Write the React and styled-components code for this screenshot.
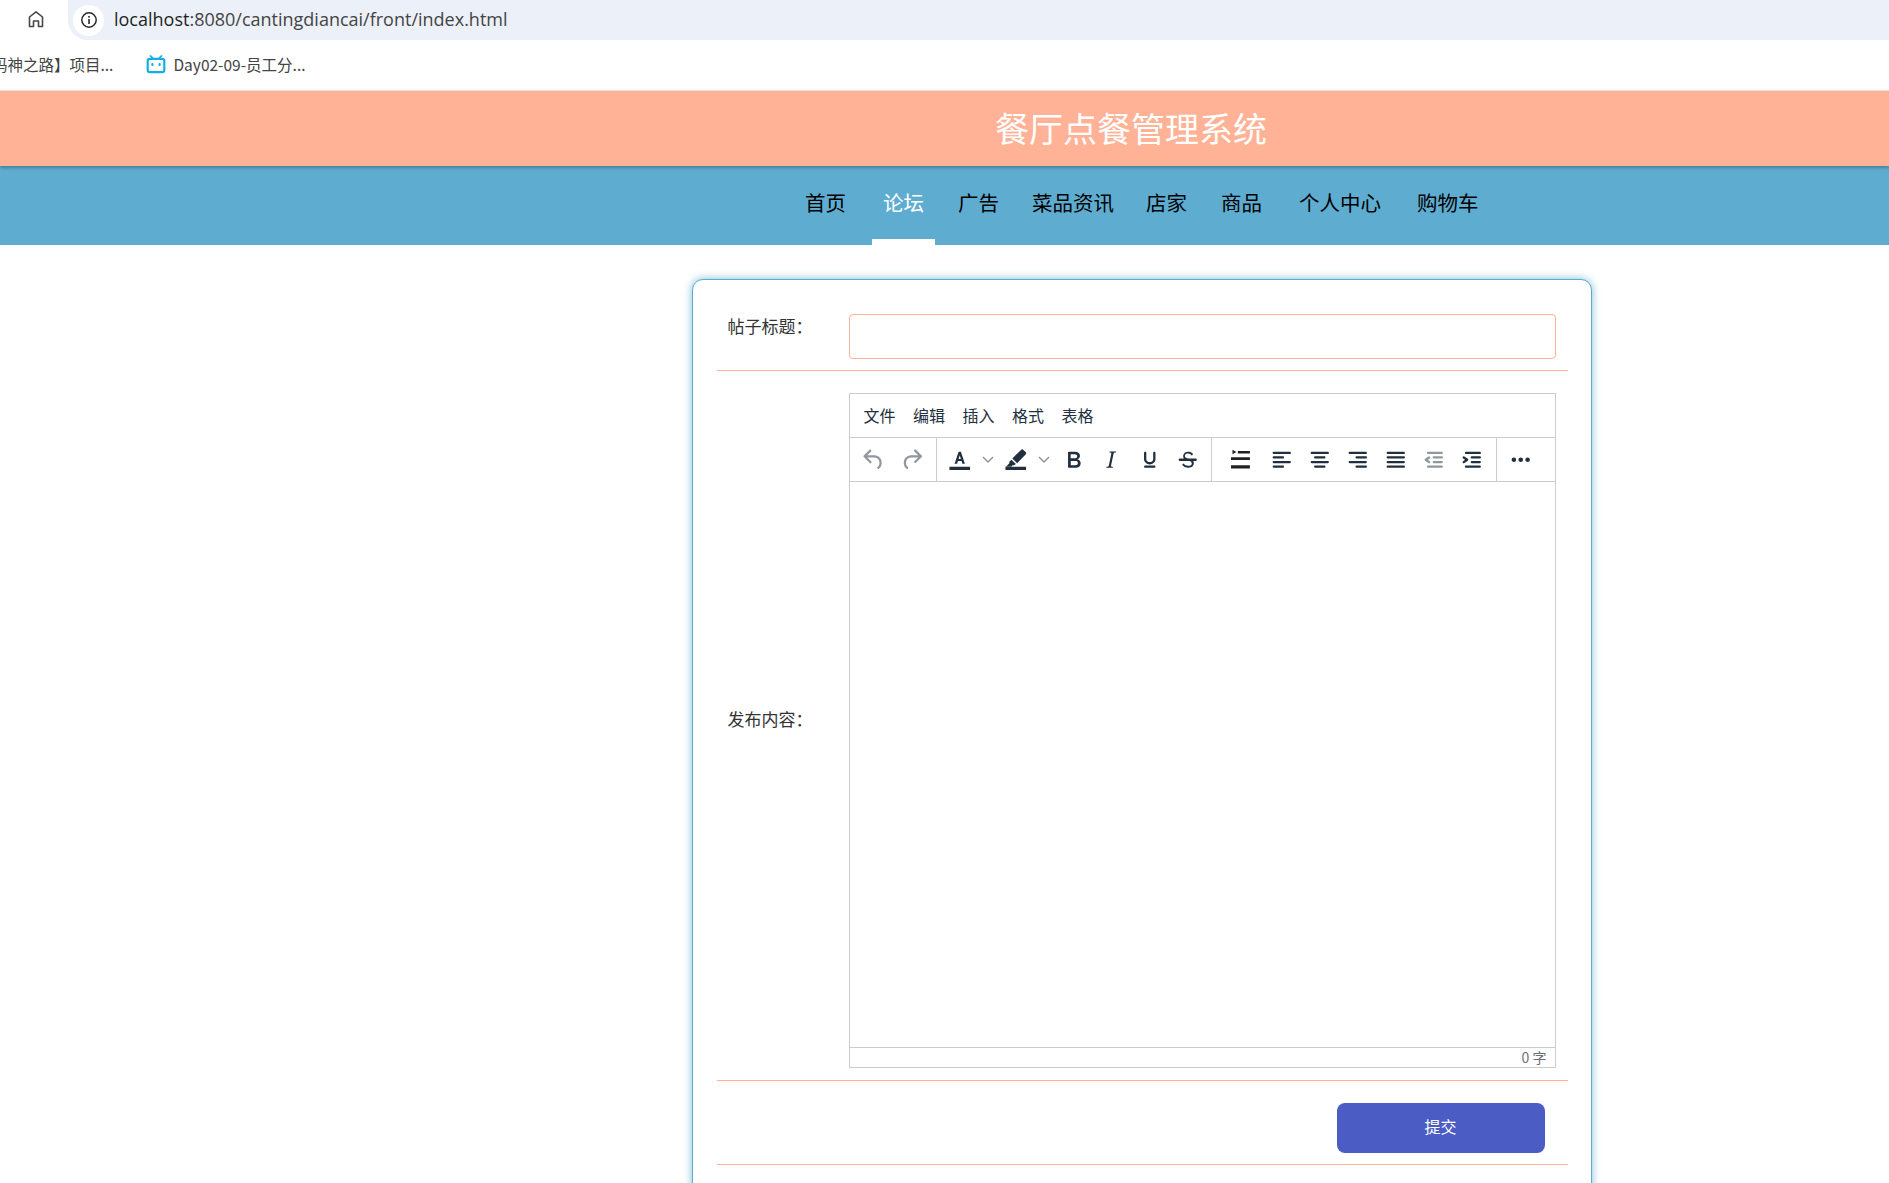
import React from "react";
import styled, { createGlobalStyle } from "styled-components";

const Global = createGlobalStyle`
  html, body { margin: 0; padding: 0; background: #fff; height: 100%; overflow: hidden; }
  body { font-family: "Noto Sans CJK SC", "Liberation Sans", sans-serif; }
  * { box-sizing: border-box; }
`;

const Page = styled.div`
  display: flex;
  flex-direction: column;
  width: 1889px;
  height: 1183px;
  overflow: hidden;
`;

const AddressRow = styled.div`
  display: flex;
  align-items: flex-start;
  height: 40px;
  flex: none;
  padding-left: 27px;
`;
const HomeIcon = styled.svg`
  width: 18px;
  height: 18px;
  margin: 10px 23px 0 0;
  flex: none;
`;
const AddressBar = styled.div`
  flex: 1;
  height: 40px;
  display: flex;
  align-items: center;
  background: #ebf0f9;
  border-radius: 0 0 0 20px;
  padding-left: 5px;
`;
const SiteBadge = styled.div`
  width: 31px;
  height: 31px;
  border-radius: 50%;
  background: #fff;
  display: flex;
  align-items: center;
  justify-content: center;
  margin-right: 10px;
`;
const Url = styled.span`
  font-family: "Open Sans", "Noto Sans", sans-serif;
  font-size: 18px;
  line-height: 38px;
  margin-bottom: 2px;
  color: #1f1f1f;
`;
const UrlMuted = styled.span`
  color: #444;
`;

const BookmarkRow = styled.div`
  display: flex;
  align-items: center;
  height: 51px;
  padding-bottom: 3px;
  flex: none;
  border-bottom: 1px solid #e4e4e4;
  overflow: hidden;
`;
const Bookmark = styled.span`
  font-size: 15.5px;
  color: #444;
  white-space: nowrap;
  margin-left: ${(p) => p.$left}px;
`;
const BiliIcon = styled.svg`
  width: 20px;
  height: 20px;
  margin-left: 33px;
  flex: none;
`;

const Header = styled.header`
  height: 75px;
  flex: none;
  background: #ffb296;
  box-shadow: 0 2px 3px rgba(0, 0, 0, 0.25);
  position: relative;
  z-index: 1;
  display: flex;
  align-items: center;
  padding-left: 995px;
`;
const Title = styled.h1`
  margin: 0 0 2px;
  font-size: 34px;
  font-weight: 400;
  color: #fff;
  white-space: nowrap;
  line-height: 1;
`;

const Nav = styled.nav`
  height: 79px;
  flex: none;
  background: #5eadd0;
  display: flex;
  align-items: stretch;
  padding-left: 805px;
`;
const NavItem = styled.a`
  position: relative;
  margin-left: ${(p) => p.$gap}px;
  font-size: 20.5px;
  line-height: 72px;
  color: ${(p) => (p.$active ? "#fff" : "#000")};
  white-space: nowrap;
  ${(p) =>
    p.$active &&
    `&::after {
      content: "";
      position: absolute;
      left: -11px;
      right: -11px;
      bottom: 0;
      height: 6px;
      background: #fff;
    }`}
`;

const Card = styled.main`
  width: 900px;
  height: 1200px;
  flex: none;
  margin: 34px 0 0 692px;
  background: #fff;
  border: 1.5px solid #5dacd0;
  border-radius: 11px;
  box-shadow: 0 0 8px rgba(93, 172, 208, 0.8);
  padding: 33.5px 23.5px 0;
`;

const Row = styled.div`
  display: flex;
  align-items: ${(p) => p.$align || "flex-start"};
  border-bottom: 1px solid #ffb296;
  padding: ${(p) => p.$pad};
`;
const Label = styled.label`
  width: 132px;
  flex: none;
  padding-left: 11px;
  margin-bottom: ${(p) => p.$lift || 0}px;
  font-size: 17px;
  line-height: 24px;
  color: #333;
  white-space: nowrap;
`;
const TitleInput = styled.input`
  width: 707px;
  height: 45px;
  border: 1px solid #ffb296;
  border-radius: 4px;
  background: #fff;
  outline: none;
`;

const Editor = styled.div`
  width: 707px;
  height: 675px;
  border: 1px solid #ccc;
  display: flex;
  flex-direction: column;
  background: #fff;
`;
const MenuBar = styled.div`
  height: 44px;
  flex: none;
  display: flex;
  align-items: center;
  gap: 17.5px;
  padding-left: 14px;
  padding-bottom: 1px;
  border-bottom: 1px solid #ccc;
`;
const MenuItem = styled.span`
  font-size: 16px;
  color: #222f3e;
`;
const Toolbar = styled.div`
  height: 44px;
  flex: none;
  display: flex;
  border-bottom: 1px solid #ccc;
`;
const ToolGroup = styled.div`
  width: ${(p) => p.$width}px;
  flex: none;
  display: flex;
  align-items: center;
  padding: 2px 0 0 ${(p) => p.$pad}px;
  border-right: ${(p) => (p.$last ? "none" : "1px solid #ccc")};
`;
const ToolButton = styled.span`
  width: ${(p) => p.$width || 38}px;
  height: 36px;
  flex: none;
  display: flex;
  align-items: center;
  justify-content: center;
`;
const ToolSvg = styled.svg`
  width: 27.5px;
  height: 27.5px;
  flex: none;
  fill: ${(p) => (p.$muted ? "rgba(34,47,62,.5)" : p.$dark ? "#222" : "#222f3e")};
`;
const ChevronSvg = styled.svg`
  width: 14px;
  height: 10px;
  flex: none;
  fill: none;
  stroke: rgba(34, 47, 62, 0.5);
  stroke-width: 1.5;
`;
const EditArea = styled.div`
  flex: 1;
`;
const StatusBar = styled.div`
  height: 20px;
  flex: none;
  border-top: 1px solid #ccc;
  display: flex;
  align-items: center;
  justify-content: flex-end;
  padding-right: 8px;
  font-size: 14px;
  color: #6a7078;
  line-height: 1;
`;

const SubmitButton = styled.button`
  width: 208px;
  height: 50px;
  margin-left: 488px;
  padding: 0 0 4px;
  border: none;
  border-radius: 8px;
  background: #4b5cc4;
  color: #fff;
  font-family: inherit;
  font-size: 16px;
`;

const I = {
  undo: "M6.4 8H12c3.7 0 6.2 2 6.8 5.1.6 2.7-.4 5.6-2.3 6.8a1 1 0 0 1-1-1.8c1.1-.6 1.8-2.7 1.4-4.6-.5-2.1-2.1-3.5-4.9-3.5H6.4l3.3 3.3a1 1 0 1 1-1.4 1.4l-5-5a1 1 0 0 1 0-1.4l5-5a1 1 0 0 1 1.4 1.4L6.4 8z",
  redo: "M17.6 10H12c-2.8 0-4.4 1.4-4.9 3.5-.4 2 .3 4 1.4 4.6a1 1 0 1 1-1 1.8c-2-1.2-2.9-4.1-2.3-6.8.6-3 3-5.1 6.8-5.1h5.6l-3.3-3.3a1 1 0 1 1 1.4-1.4l5 5a1 1 0 0 1 0 1.4l-5 5a1 1 0 0 1-1.4-1.4l3.3-3.3z",
  fore: "M3 18h18v3H3zM7.500 15.500L11 5h2l3.500 10.500h-2.200l-.7-2.400h-3.200l-.7 2.400zm3.500-4.100h2l-1-3.400z",
  hilite: "M3 18h18v3H3zM16.600 3.400a1.500 1.500 0 0 1 2.100 0l1.900 1.900a1.500 1.500 0 0 1 0 2.100L13.200 15l-4.200-4.200zM8.200 11.900l3.900 3.900-1.600 1.100H9.200l-1 .9H3.600l2.800-2.700v-1.300z",
  bold: "M7.8 19c-.3 0-.5 0-.6-.2l-.2-.5V5.700c0-.2 0-.4.2-.5l.6-.2h5c1.500 0 2.700.3 3.500 1 .7.6 1.100 1.400 1.100 2.500a3 3 0 0 1-.6 1.900c-.4.6-1 1-1.600 1.200.4.1.9.3 1.300.6s.8.7 1 1.200c.4.4.5 1 .5 1.600 0 1.300-.4 2.300-1.300 3-.8.7-2.100 1-3.800 1H7.800zm5-8.300c.6 0 1.200-.1 1.600-.5.4-.3.6-.7.6-1.300 0-1.100-.8-1.700-2.300-1.700H9.300v3.500h3.400zm.5 6c.7 0 1.300-.1 1.700-.4.4-.4.6-.9.6-1.500s-.2-1-.7-1.400c-.4-.3-1-.4-2-.4H9.400v3.800h4z",
  italic: "M16.7 4.7l-.1.9h-.3c-.6 0-1 0-1.400.3-.3.3-.4.6-.5 1.100l-2.100 9.800v.6c0 .5.4.8 1.400.8h.2l-.2.8H8l.2-.8h.2c1.100 0 1.800-.5 2-1.500l2-9.800.1-.5c0-.6-.4-.8-1.400-.8h-.3l.2-.9h5.800z",
  under: "M16 5c.6 0 1 .4 1 1v5.500a4 4 0 0 1-.4 1.800l-1 1.400a5.300 5.300 0 0 1-5.500 1 5 5 0 0 1-1.600-1c-.5-.4-.8-.9-1.100-1.400a4 4 0 0 1-.4-1.800V6c0-.6.4-1 1-1s1 .4 1 1v5.500c0 .3 0 .6.2 1l.6.7a3.300 3.300 0 0 0 2.200.8 3.400 3.400 0 0 0 2.200-.8c.3-.2.4-.5.6-.8l.2-.9V6c0-.6.4-1 1-1zM8 17h8c.6 0 1 .4 1 1s-.4 1-1 1H8a1 1 0 0 1 0-2z",
  strike: "M15.600 8.500c-.5-.7-1-1.100-1.300-1.300-.6-.4-1.300-.6-2-.6-2.700 0-2.800 1.700-2.800 2.100 0 1.600 1.800 2 3.200 2.300 4.400.9 4.600 2.800 4.600 3.900 0 1.400-.7 4.100-5 4.100A6.200 6.200 0 0 1 7 16.400l1.500-1.100c.4.6 1.600 2 3.700 2 1.600 0 2.500-.4 3-1 .5-.8.3-2-.3-2.600-.7-.8-2.500-1.100-3.700-1.300C9.500 12 8 11 8 9c0-.9.5-4 4.400-4 1.800 0 3 .5 4.300 2l-1.100 1.500zM5 11h14a1 1 0 0 1 0 2H5a1 1 0 0 1 0-2z",
  lineheight: "M4.800 3.200l3.400 2-3.400 2zM9.500 4.300H20v2.200H9.500zM3.500 9.800H20v2.400H3.500zM3.500 16.800H20v2.800H3.500z",
  left: "M5 5h14c.6 0 1 .4 1 1s-.4 1-1 1H5a1 1 0 1 1 0-2zm0 4h8c.6 0 1 .4 1 1s-.4 1-1 1H5a1 1 0 1 1 0-2zm0 8h8c.6 0 1 .4 1 1s-.4 1-1 1H5a1 1 0 0 1 0-2zm0-4h14c.6 0 1 .4 1 1s-.4 1-1 1H5a1 1 0 0 1 0-2z",
  center: "M5 5h14c.6 0 1 .4 1 1s-.4 1-1 1H5a1 1 0 1 1 0-2zm3 4h8c.6 0 1 .4 1 1s-.4 1-1 1H8a1 1 0 1 1 0-2zm0 8h8c.6 0 1 .4 1 1s-.4 1-1 1H8a1 1 0 0 1 0-2zm-3-4h14c.6 0 1 .4 1 1s-.4 1-1 1H5a1 1 0 0 1 0-2z",
  right: "M5 5h14c.6 0 1 .4 1 1s-.4 1-1 1H5a1 1 0 1 1 0-2zm6 4h8c.6 0 1 .4 1 1s-.4 1-1 1h-8a1 1 0 0 1 0-2zm0 8h8c.6 0 1 .4 1 1s-.4 1-1 1h-8a1 1 0 0 1 0-2zm-6-4h14c.6 0 1 .4 1 1s-.4 1-1 1H5a1 1 0 0 1 0-2z",
  justify: "M5 5h14c.6 0 1 .4 1 1s-.4 1-1 1H5a1 1 0 1 1 0-2zm0 4h14c.6 0 1 .4 1 1s-.4 1-1 1H5a1 1 0 1 1 0-2zm0 4h14c.6 0 1 .4 1 1s-.4 1-1 1H5a1 1 0 0 1 0-2zm0 4h14c.6 0 1 .4 1 1s-.4 1-1 1H5a1 1 0 0 1 0-2z",
  outdent: "M7 5h12c.6 0 1 .4 1 1s-.4 1-1 1H7a1 1 0 1 1 0-2zm5 4h7c.6 0 1 .4 1 1s-.4 1-1 1h-7a1 1 0 0 1 0-2zm0 4h7c.6 0 1 .4 1 1s-.4 1-1 1h-7a1 1 0 0 1 0-2zm-5 4h12a1 1 0 0 1 0 2H7a1 1 0 0 1 0-2zm1.600-3.800a1 1 0 0 1-1.200 1.600l-3-2a1 1 0 0 1 0-1.600l3-2a1 1 0 0 1 1.200 1.600L6.800 12l1.800 1.200z",
  indent: "M7 5h12c.6 0 1 .4 1 1s-.4 1-1 1H7a1 1 0 1 1 0-2zm5 4h7c.6 0 1 .4 1 1s-.4 1-1 1h-7a1 1 0 0 1 0-2zm0 4h7c.6 0 1 .4 1 1s-.4 1-1 1h-7a1 1 0 0 1 0-2zm-5 4h12a1 1 0 0 1 0 2H7a1 1 0 0 1 0-2zm-2.600-3.800L6.200 12l-1.800-1.200a1 1 0 0 1 1.200-1.600l3 2a1 1 0 0 1 0 1.600l-3 2a1 1 0 1 1-1.200-1.600z",
  more: "M6 10a2 2 0 0 0-2 2c0 1.100.9 2 2 2a2 2 0 0 0 2-2 2 2 0 0 0-2-2zm12 0a2 2 0 0 0-2 2c0 1.100.9 2 2 2a2 2 0 0 0 2-2 2 2 0 0 0-2-2zm-6 0a2 2 0 0 0-2 2c0 1.100.9 2 2 2a2 2 0 0 0 2-2 2 2 0 0 0-2-2z",
};

const Tool = ({ d, muted, dark, width }) => (
  <ToolButton $width={width}>
    <ToolSvg viewBox="0 0 24 24" $muted={muted} $dark={dark}>
      <path d={d} />
    </ToolSvg>
  </ToolButton>
);

const Chevron = () => (
  <ToolButton $width={26}>
    <ChevronSvg viewBox="0 0 14 10">
      <path d="M2 2l5 5 5-5" />
    </ChevronSvg>
  </ToolButton>
);

const NAV = [
  ["首页", 0],
  ["论坛", 37],
  ["广告", 34],
  ["菜品资讯", 33],
  ["店家", 32],
  ["商品", 34],
  ["个人中心", 37],
  ["购物车", 36],
];

export default function App() {
  return (
    <Page>
      <Global />
      <AddressRow>
        <HomeIcon viewBox="0 0 18 18" fill="none" stroke="#474747" strokeWidth="1.6">
          <path d="M2.500 16.500V7L9 1.800 15.500 7v9.500h-4V11h-5v5.500z" strokeLinejoin="round" />
        </HomeIcon>
        <AddressBar>
          <SiteBadge>
            <svg width="18" height="18" viewBox="0 0 18 18">
              <circle cx="9" cy="9" r="7.200" fill="none" stroke="#2a2a2a" strokeWidth="1.500" />
              <rect x="8.200" y="8" width="1.600" height="5" fill="#2a2a2a" />
              <rect x="8.200" y="5" width="1.600" height="1.700" fill="#2a2a2a" />
            </svg>
          </SiteBadge>
          <Url>
            localhost<UrlMuted>:8080/cantingdiancai/front/index.html</UrlMuted>
          </Url>
        </AddressBar>
      </AddressRow>
      <BookmarkRow>
        <Bookmark $left={-8}>码神之路】项目...</Bookmark>
        <BiliIcon viewBox="0 0 20 20">
          <path
            fill="#14aee6"
            d="M4 1.200l1 0 2.600 2.600h4.800L15 1.200l1 0 .6.8-2 1.800h1.600A3.200 3.200 0 0 1 19.400 7v9a3.200 3.200 0 0 1-3.200 3.200H3.800A3.200 3.200 0 0 1 .6 16V7a3.200 3.200 0 0 1 3.200-3.200h1.600l-2-1.800zM3.800 6a1 1 0 0 0-1 1v9a1 1 0 0 0 1 1h12.400a1 1 0 0 0 1-1V7a1 1 0 0 0-1-1z"
          />
          <rect x="5.300" y="9" width="2.200" height="3" rx="1" fill="#14aee6" />
          <rect x="12.500" y="9" width="2.200" height="3" rx="1" fill="#14aee6" />
        </BiliIcon>
        <Bookmark $left={7}>Day02-09-员工分...</Bookmark>
      </BookmarkRow>
      <Header>
        <Title>餐厅点餐管理系统</Title>
      </Header>
      <Nav>
        {NAV.map(([label, gap], i) => (
          <NavItem key={label} $gap={gap} $active={i === 1}>
            {label}
          </NavItem>
        ))}
      </Nav>
      <Card>
        <Row $pad="0 0 11px">
          <Label>帖子标题：</Label>
          <TitleInput />
        </Row>
        <Row $align="center" $pad="22px 0 12px">
          <Label $lift={22}>发布内容：</Label>
          <Editor>
            <MenuBar>
              {["文件", "编辑", "插入", "格式", "表格"].map((m) => (
                <MenuItem key={m}>{m}</MenuItem>
              ))}
            </MenuBar>
            <Toolbar>
              <ToolGroup $width={87} $pad={5}>
                <Tool d={I.undo} muted />
                <Tool d={I.redo} muted />
              </ToolGroup>
              <ToolGroup $width={275} $pad={8}>
                <Tool d={I.fore} width={30} />
                <Chevron />
                <Tool d={I.hilite} width={30} />
                <Chevron />
                <Tool d={I.bold} width={34} />
                <Tool d={I.italic} width={40} />
                <Tool d={I.under} />
                <Tool d={I.strike} />
              </ToolGroup>
              <ToolGroup $width={285} $pad={7}>
                <Tool d={I.lineheight} dark width={44} />
                <Tool d={I.left} />
                <Tool d={I.center} />
                <Tool d={I.right} />
                <Tool d={I.justify} />
                <Tool d={I.outdent} muted />
                <Tool d={I.indent} />
              </ToolGroup>
              <ToolGroup $width={58} $pad={5} $last>
                <Tool d={I.more} />
              </ToolGroup>
            </Toolbar>
            <EditArea />
            <StatusBar>0 字</StatusBar>
          </Editor>
        </Row>
        <Row $pad="22px 0 11px">
          <Label />
          <SubmitButton>提交</SubmitButton>
        </Row>
      </Card>
    </Page>
  );
}
